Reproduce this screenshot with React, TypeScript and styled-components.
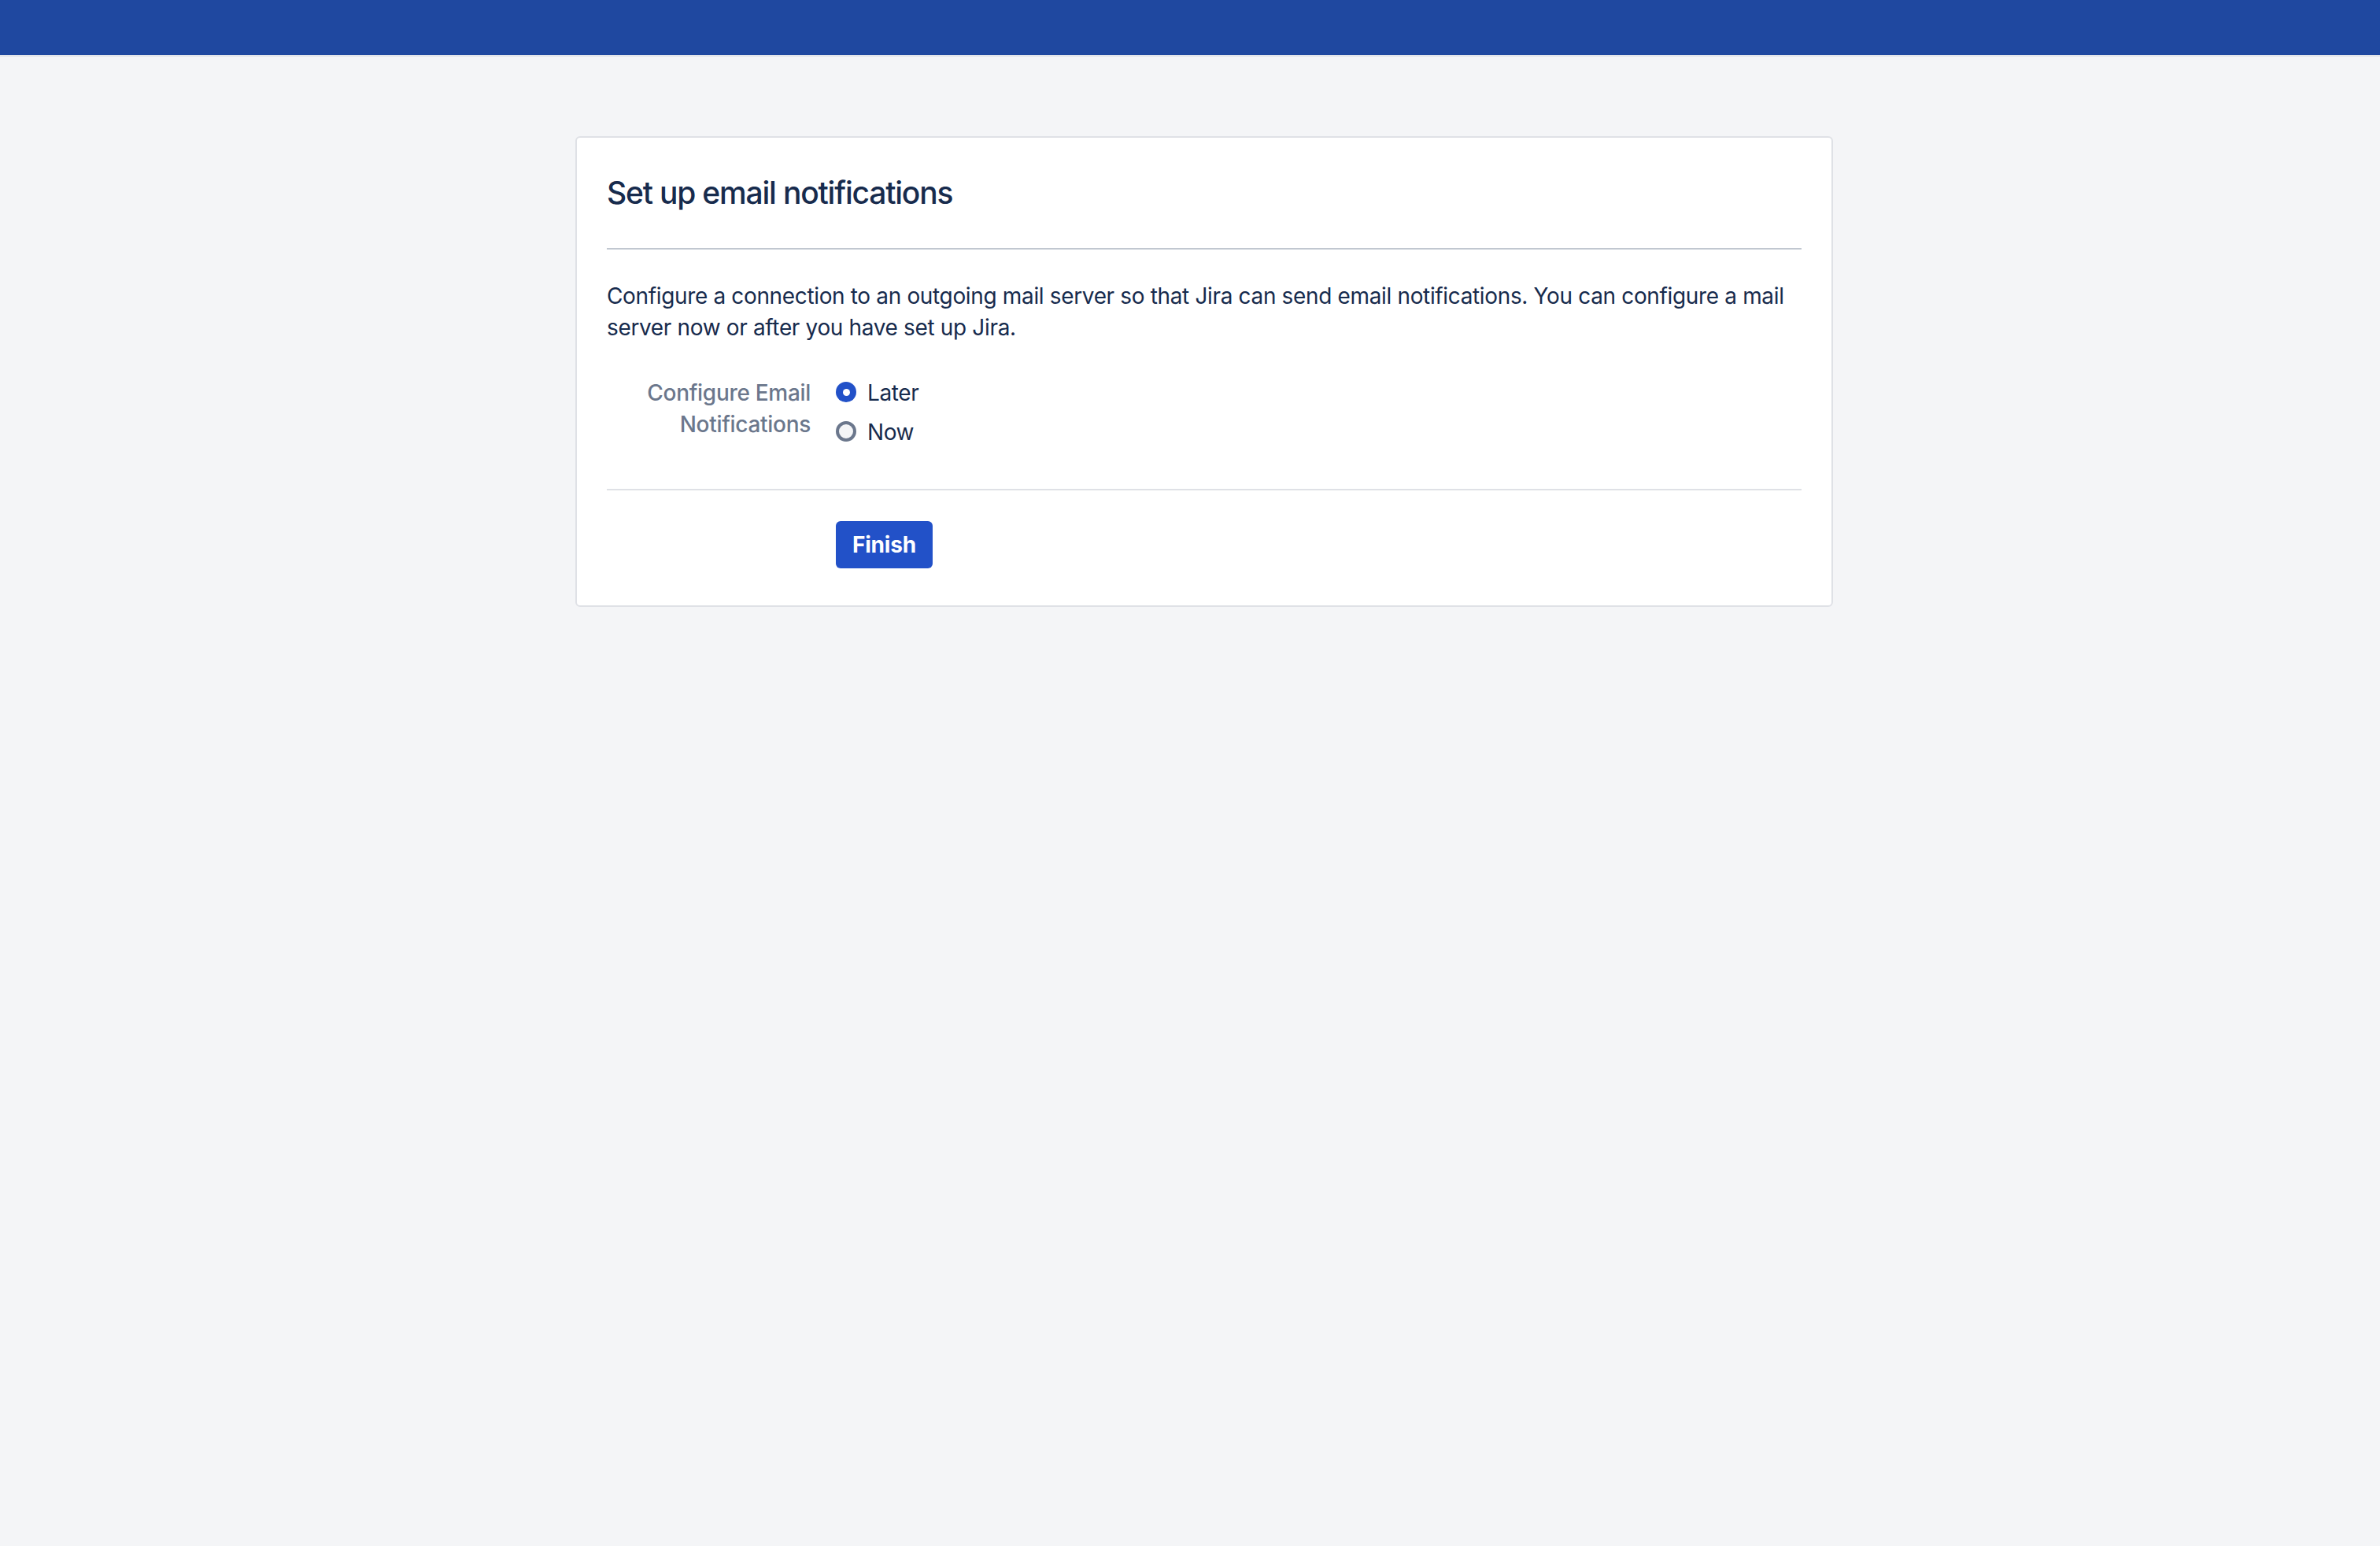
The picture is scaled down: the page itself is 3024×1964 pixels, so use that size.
import { useState } from 'react';
import styled, { createGlobalStyle } from 'styled-components';

const GlobalStyle = createGlobalStyle`
	html,
	body {
		margin: 0;
		padding: 0;
		background: #f4f5f7;
	}
	body {
		font-family: Inter, 'Noto Sans', 'Liberation Sans', sans-serif;
		color: #172b4d;
		min-height: 1964px;
	}
`;

const Header = styled.header`
	height: 70px;
	background: #1f48a0;
	border-bottom: 2px solid #e2e5ea;
`;

const Main = styled.main`
	display: flex;
	justify-content: center;
	padding: 101px 0 0 36px;
`;

const Card = styled.section`
	width: 1598px;
	box-sizing: border-box;
	background: #ffffff;
	border: 2px solid #dfe1e6;
	border-radius: 6px;
	padding: 46px 38px 47px;
`;

const Title = styled.h1`
	margin: 0;
	font-size: 39px;
	line-height: 48px;
	font-weight: 500;
	letter-spacing: -1.2px;
	color: #172b4d;
`;

const Divider = styled.hr<{ $tone: 'dark' | 'light' }>`
	margin: 0;
	border: 0;
	height: 2px;
	background: ${({ $tone }) => ($tone === 'dark' ? '#c1c7d0' : '#dfe1e6')};
`;

const TitleBar = styled.div`
	padding-bottom: 46px;
`;

const Intro = styled.p`
	margin: 39px 0 0;
	font-size: 28px;
	line-height: 40px;
	letter-spacing: -0.35px;
	color: #172b4d;
`;

const FieldRow = styled.div`
	display: grid;
	grid-template-columns: 259px auto;
	column-gap: 32px;
	margin-top: 43px;
	padding-bottom: 52px;
`;

const FieldLabel = styled.div`
	text-align: right;
	font-size: 28px;
	line-height: 40px;
	font-weight: 500;
	letter-spacing: -0.3px;
	color: #6b778c;
`;

const Options = styled.div`
	display: flex;
	flex-direction: column;
	gap: 10px;
`;

const Option = styled.label`
	display: flex;
	align-items: center;
	gap: 14px;
	font-size: 28px;
	line-height: 40px;
	letter-spacing: -0.4px;
	color: #172b4d;
	cursor: pointer;
`;

const RadioMark = styled.span<{ $checked: boolean }>`
	width: 26px;
	height: 26px;
	box-sizing: border-box;
	border-radius: 50%;
	margin-top: -2px;
	display: flex;
	align-items: center;
	justify-content: center;
	border: ${({ $checked }) => ($checked ? '0' : '4px solid #6b778c')};
	background: ${({ $checked }) => ($checked ? '#2251c8' : '#f4f5f7')};
	&::after {
		content: '';
		width: 9px;
		height: 9px;
		border-radius: 50%;
		background: #ffffff;
		display: ${({ $checked }) => ($checked ? 'block' : 'none')};
	}
`;

const HiddenInput = styled.input`
	display: none;
`;

const Actions = styled.div`
	padding: 39px 0 0 291px;
`;

const Button = styled.button`
	height: 60px;
	padding: 0 21px;
	border: 0;
	border-radius: 6px;
	background: #2251c8;
	color: #ffffff;
	font-family: inherit;
	font-size: 28px;
	font-weight: 700;
	letter-spacing: -0.2px;
	cursor: pointer;
`;

const choices = [
	{ value: 'later', label: 'Later' },
	{ value: 'now', label: 'Now' },
];

export default function App() {
	const [choice, setChoice] = useState('later');

	return (
		<>
			<GlobalStyle />
			<Header />
			<Main>
				<Card>
					<TitleBar>
						<Title>Set up email notifications</Title>
					</TitleBar>
					<Divider $tone="dark" />
					<Intro>
						Configure a connection to an outgoing mail server so that Jira can
						send email notifications. You can configure a mail server now or
						after you have set up Jira.
					</Intro>
					<FieldRow>
						<FieldLabel>
							Configure Email
							<br />
							Notifications
						</FieldLabel>
						<Options>
							{choices.map((c) => (
								<Option key={c.value}>
									<HiddenInput
										type="radio"
										name="mail"
										value={c.value}
										checked={choice === c.value}
										onChange={() => setChoice(c.value)}
									/>
									<RadioMark $checked={choice === c.value} />
									{c.label}
								</Option>
							))}
						</Options>
					</FieldRow>
					<Divider $tone="light" />
					<Actions>
						<Button>Finish</Button>
					</Actions>
				</Card>
			</Main>
		</>
	);
}
